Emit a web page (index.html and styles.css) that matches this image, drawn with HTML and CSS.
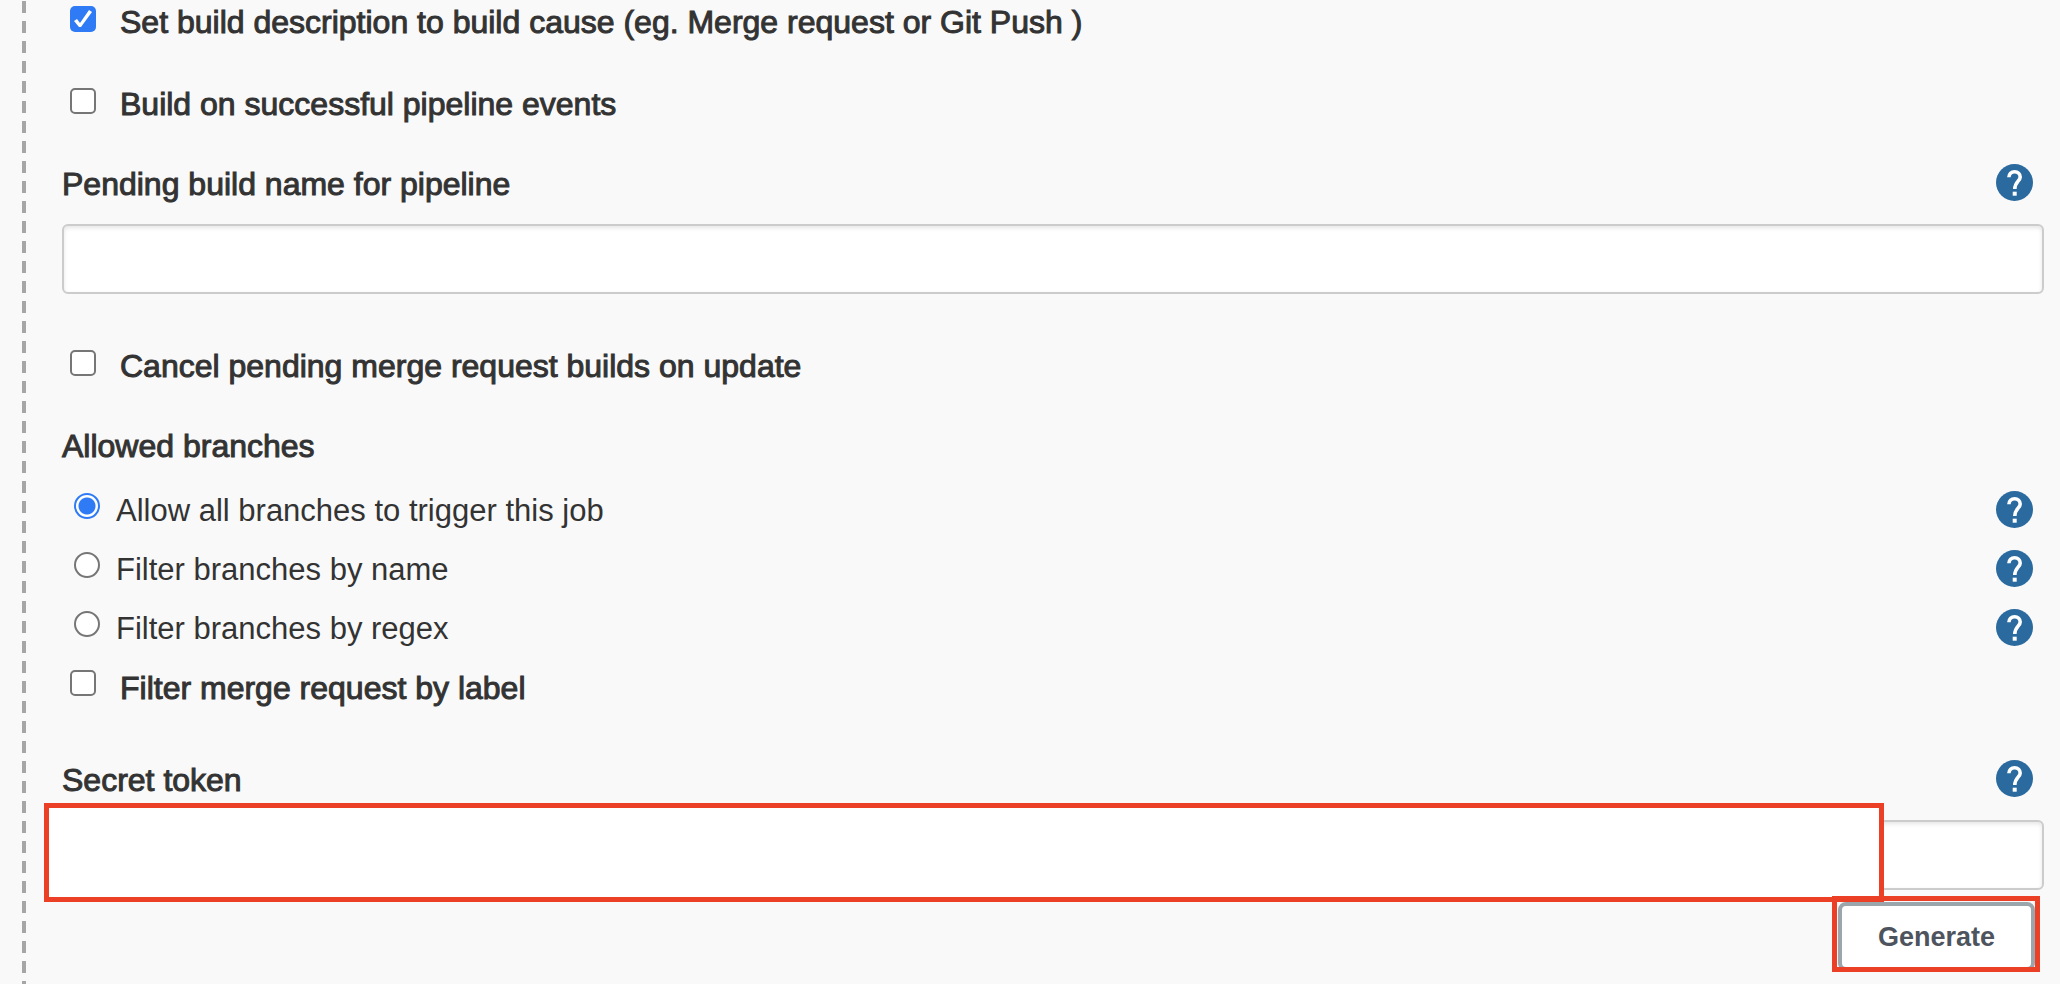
FILE: index.html
```html
<!DOCTYPE html>
<html lang="en">
<head>
<meta charset="utf-8">
<title>Build triggers</title>
<link rel="stylesheet" href="styles.css">
</head>
<body>
<svg class="sprite" aria-hidden="true">
  <symbol id="help" viewBox="0 0 37 37">
    <circle cx="18.5" cy="18.5" r="18.5" fill="#2b6a9f"/>
    <path d="M12.900 13.300c0-3.300 2.400-5.600 5.700-5.600s5.600 2.300 5.600 5.300c0 4-5.400 4.800-5.400 12" fill="none" stroke="#fff" stroke-width="3.600"/>
    <rect x="16.700" y="27.700" width="4" height="4" fill="#fff"/>
  </symbol>
</svg>
<form class="config">
  <div class="row">
    <input class="check" type="checkbox" id="desc" checked>
    <label class="strong" for="desc">Set build description to build cause (eg. Merge request or Git Push )</label>
  </div>
  <div class="row after-option">
    <input class="check" type="checkbox" id="success">
    <label class="strong" for="success">Build on successful pipeline events</label>
  </div>
  <div class="row section">
    <label class="strong" for="pending">Pending build name for pipeline</label>
    <button class="help" type="button" aria-label="Help for pending build name"><svg><use href="#help"/></svg></button>
  </div>
  <div class="field"><input class="text" type="text" id="pending"></div>
  <div class="row after-field">
    <input class="check" type="checkbox" id="cancel">
    <label class="strong" for="cancel">Cancel pending merge request builds on update</label>
  </div>
  <div class="row section"><span class="strong" id="allowed">Allowed branches</span></div>
  <div class="choices" role="radiogroup" aria-labelledby="allowed">
    <div class="row">
      <input class="radio" type="radio" name="branches" id="all" checked>
      <label for="all">Allow all branches to trigger this job</label>
      <button class="help" type="button" aria-label="Help for all branches"><svg><use href="#help"/></svg></button>
    </div>
    <div class="row">
      <input class="radio" type="radio" name="branches" id="name">
      <label for="name">Filter branches by name</label>
      <button class="help" type="button" aria-label="Help for filter by name"><svg><use href="#help"/></svg></button>
    </div>
    <div class="row">
      <input class="radio" type="radio" name="branches" id="regex">
      <label for="regex">Filter branches by regex</label>
      <button class="help" type="button" aria-label="Help for filter by regex"><svg><use href="#help"/></svg></button>
    </div>
    <div class="row">
      <input class="check" type="checkbox" id="label">
      <label class="strong" for="label">Filter merge request by label</label>
    </div>
  </div>
  <div class="row after-field">
    <label class="strong" for="token">Secret token</label>
    <button class="help" type="button" aria-label="Help for secret token"><svg><use href="#help"/></svg></button>
  </div>
  <div class="field">
    <input class="text" type="text" id="token">
    <div class="marker"></div>
  </div>
  <div class="actions">
    <div class="frame"><button class="generate" type="button">Generate</button></div>
  </div>
</form>
</body>
</html>
```
FILE: styles.css
```css
* {
  box-sizing: border-box;
}

body {
  margin: 0;
  background: #f9f9f9;
  color: #333;
  font: 31px/40px "Liberation Sans", Arial, sans-serif;
}

.sprite {
  display: none;
}

.config {
  min-height: 100vh;
  padding: 2px 16px 12px 62px;
  background: repeating-linear-gradient(#f9f9f9 0 1px, #a6a6a6 1px 13px, #f9f9f9 13px 20px) 22px 0 / 4px 100% no-repeat;
}

.row {
  display: flex;
  align-items: flex-start;
}

.after-option {
  margin-top: 42px;
}

.section {
  margin-top: 40px;
}

.after-field {
  margin-top: 52px;
}

.strong {
  font-size: 32px;
  -webkit-text-stroke: 1px #333;
}

.check,
.radio {
  appearance: none;
  flex: none;
  width: 26px;
  height: 26px;
  border: 2px solid #767676;
  background: #fff;
}

.check {
  margin: 4px 24px 0 8px;
  border-radius: 5px;
}

.check:checked {
  border: 0;
  background: #2f7bf6;
}

.check:checked::before {
  content: "";
  display: block;
  height: 26px;
  background: #fff;
  clip-path: polygon(4px 15px, 7px 13px, 10px 17px, 19px 4px, 22px 6px, 11px 21px, 9px 21px);
}

.radio {
  margin: 2px 16px 0 12px;
  border-radius: 50%;
}

.radio:checked {
  border-color: #2f7bf6;
  background: radial-gradient(circle, #2f7bf6 0 8px, #fff 9px);
}

.help {
  flex: none;
  width: 37px;
  height: 37px;
  margin: 0 11px 0 auto;
  padding: 0;
  border: 0;
  background: none;
}

.help svg {
  display: block;
  width: 100%;
  height: 100%;
}

.field {
  position: relative;
  margin-top: 20px;
}

.text {
  display: block;
  width: 100%;
  height: 70px;
  padding: 0 16px;
  border: 2px solid #ccc;
  border-radius: 6px;
  background: #fff;
  box-shadow: inset 0 2px 4px rgba(0, 0, 0, 0.1);
  font: inherit;
}

.choices {
  display: grid;
  gap: 19px;
  margin-top: 25px;
}

.choices .check {
  margin-top: 2px;
}

.marker {
  position: absolute;
  inset: -17px 160px -12px -18px;
  border: 5px solid #eb4026;
  background: #fff;
}

.actions {
  display: flex;
  justify-content: flex-end;
  margin: 6px 4px 0 0;
}

.frame {
  position: relative;
  height: 76px;
  padding: 1px 0 0 1px;
  overflow: hidden;
  border: 5px solid #eb4026;
}

.generate {
  height: 69px;
  padding: 0 36px;
  border: 4px solid #9aa6ac;
  border-radius: 8px;
  background: #fff;
  color: #4d545d;
  font: bold 27px/32px "Liberation Sans", Arial, sans-serif;
}
```
